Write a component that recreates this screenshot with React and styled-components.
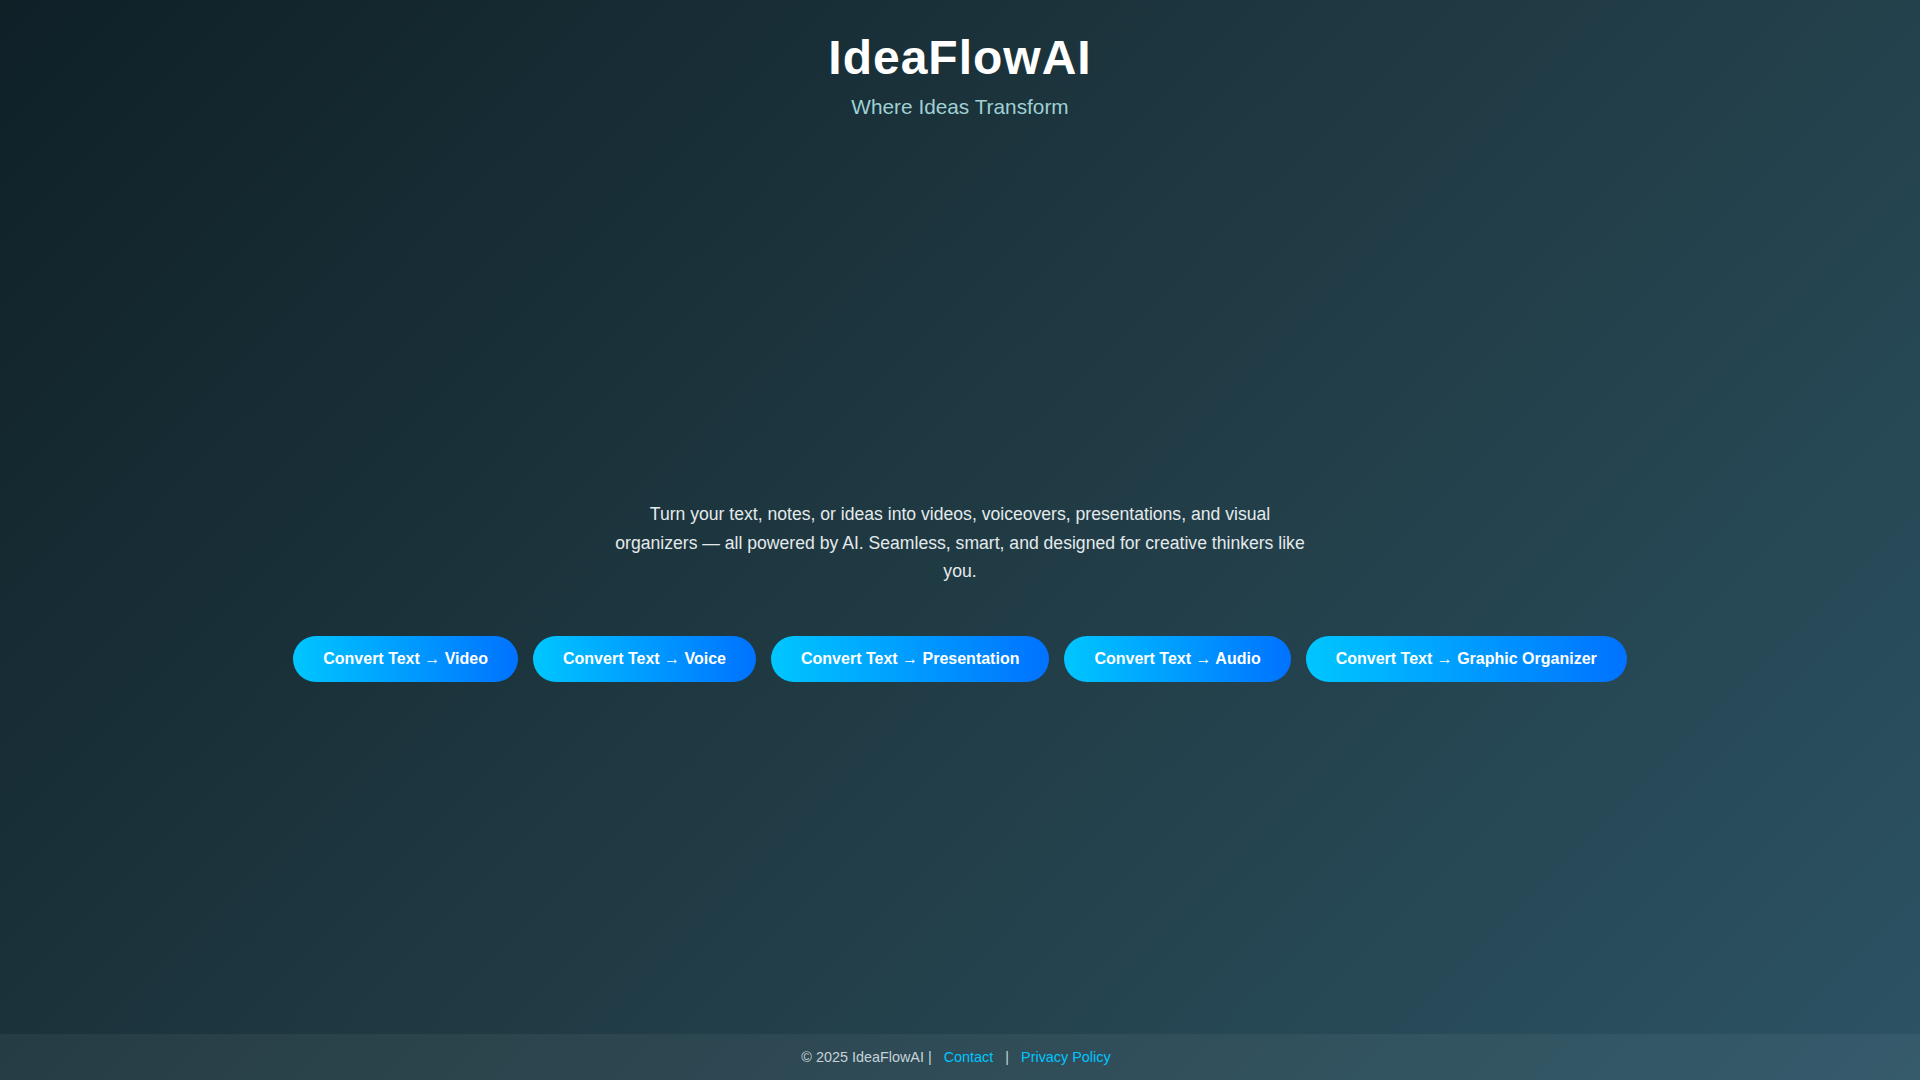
import React from "react"
import styled, { createGlobalStyle } from "styled-components"

const GlobalStyle = createGlobalStyle`
  * {
    box-sizing: border-box;
  }
  body {
    margin: 0;
    font-family: "Liberation Sans", Arial, sans-serif;
  }
`

const actions = ["Video", "Voice", "Presentation", "Audio", "Graphic Organizer"]

export default function App() {
  return (
    <>
      <GlobalStyle />
      <Page>
        <Header>
          <Title>IdeaFlowAI</Title>
          <Tagline>Where Ideas Transform</Tagline>
        </Header>
        <Main>
          <Intro>
            Turn your text, notes, or ideas into videos, voiceovers,
            presentations, and visual organizers — all powered by AI. Seamless,
            smart, and designed for creative thinkers like you.
          </Intro>
          <ButtonRow>
            {actions.map((a) => (
              <ConvertButton key={a}>Convert Text → {a}</ConvertButton>
            ))}
          </ButtonRow>
        </Main>
        <Footer>
          © 2025 IdeaFlowAI | <FooterLink href="#">Contact</FooterLink> |{" "}
          <FooterLink href="#">Privacy Policy</FooterLink>
        </Footer>
      </Page>
    </>
  )
}

const Page = styled.div`
  display: flex;
  flex-direction: column;
  min-height: 100vh;
  background: linear-gradient(135deg, #0f2027, #203a43, #2c5364);
  color: #fff;
`

const Header = styled.header`
  padding: 30px 20px 29px;
  text-align: center;
`

const Title = styled.h1`
  margin: 0;
  font-size: 48px;
  font-weight: bold;
  letter-spacing: 1px;
  color: #fff;
`

const Tagline = styled.p`
  margin: 10px 0 0;
  font-size: 20.8px;
  color: #9fd0d4;
`

const Main = styled.main`
  flex: 1;
  display: flex;
  flex-direction: column;
  align-items: center;
  justify-content: center;
  padding: 0 20px;
`

const Intro = styled.p`
  max-width: 700px;
  margin: 0 0 50px;
  font-size: 17.6px;
  line-height: 28.8px;
  text-align: center;
  color: #e4eaec;
`

const ButtonRow = styled.div`
  display: flex;
  flex-wrap: wrap;
  justify-content: center;
  gap: 15px;
`

const ConvertButton = styled.button`
  border: none;
  border-radius: 50px;
  padding: 14px 30px;
  font-family: "Liberation Sans", Arial, sans-serif;
  font-size: 16px;
  font-weight: bold;
  line-height: 18px;
  color: #fff;
  background: linear-gradient(to right, #00c6ff, #0072ff);
  cursor: pointer;
`

const Footer = styled.footer`
  padding: 15px 20px;
  text-align: center;
  font-size: 14.4px;
  line-height: 16px;
  color: #c6d3d8;
  background: rgba(255, 255, 255, 0.05);
`

const FooterLink = styled.a`
  margin: 0 8px;
  color: #00c6ff;
  text-decoration: none;
`
